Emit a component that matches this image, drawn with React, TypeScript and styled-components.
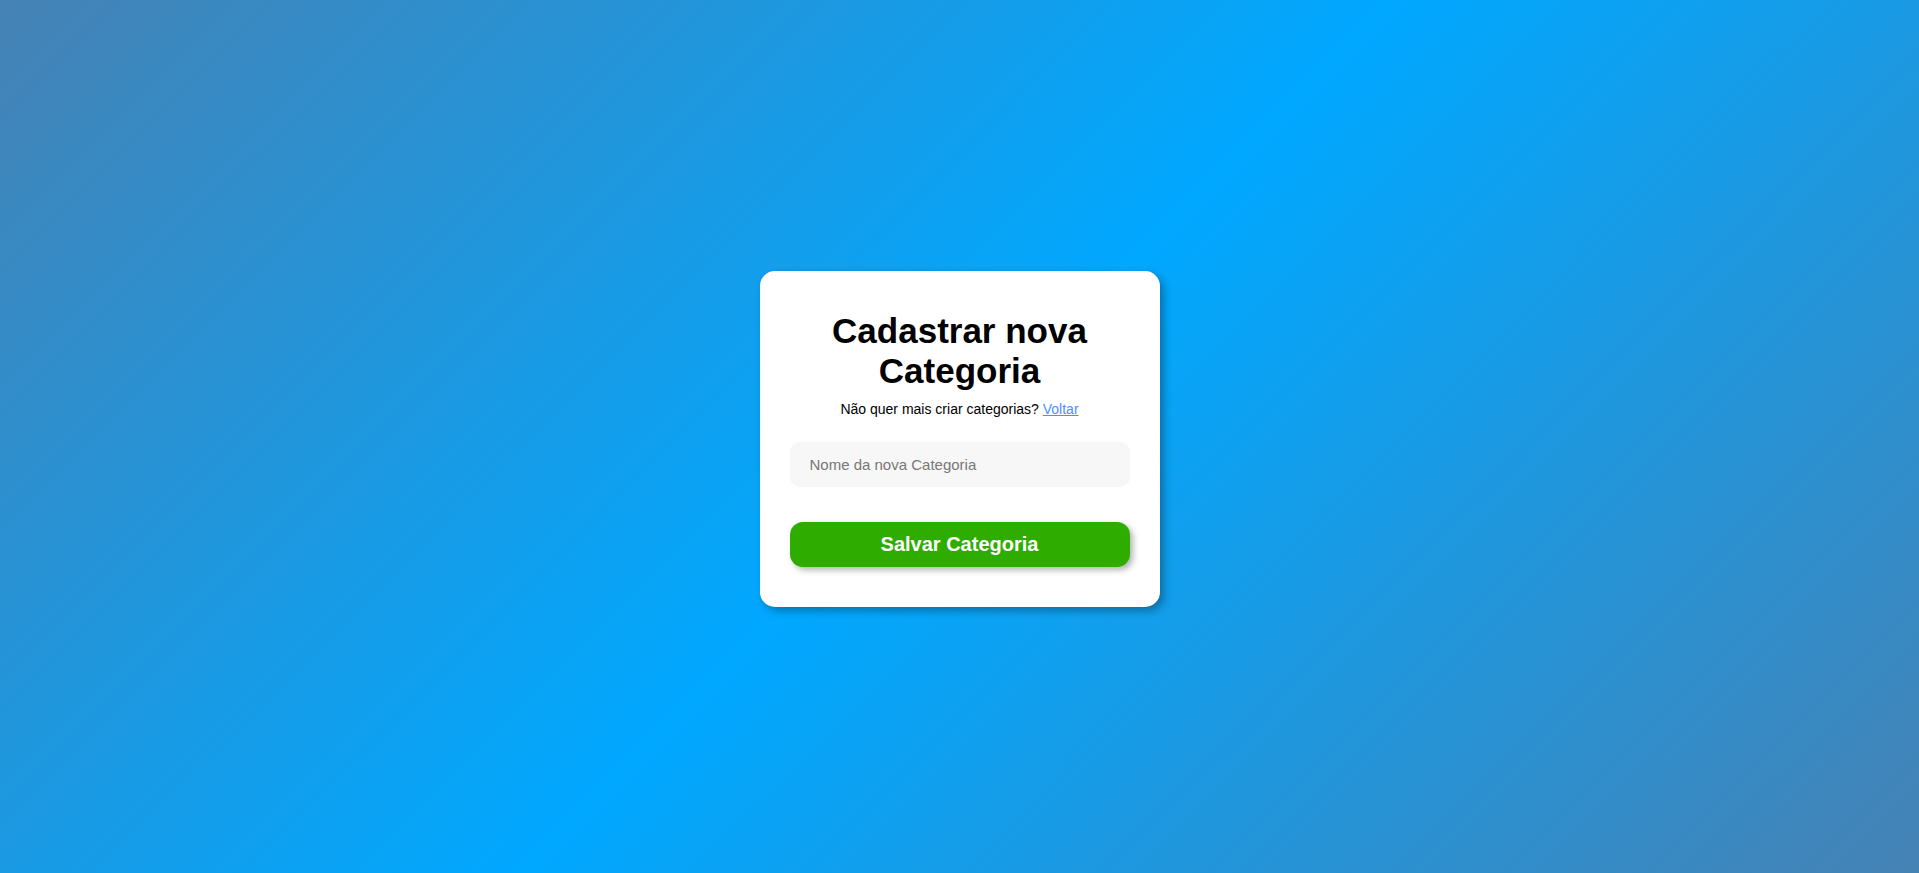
import React from "react";
import styled, { createGlobalStyle } from "styled-components";

const GlobalStyle = createGlobalStyle`
  * { box-sizing: border-box; }
  html, body { margin: 0; padding: 0; height: 100%; }
  body {
    font-family: "Liberation Sans", Arial, sans-serif;
    background: linear-gradient(135deg, #4682b4 0%, #00a8ff 50%, #4682b4 100%);
    background-attachment: fixed;
  }
  #root { height: 100%; }
`;

const Page = styled.main`
  min-height: 100vh;
  display: flex;
  align-items: center;
  justify-content: center;
  padding-top: 5px;
`;

const Card = styled.form`
  width: 400px;
  background: #ffffff;
  border-radius: 15px;
  padding: 40px 30px;
  box-shadow: 4px 4px 8px rgba(0, 0, 0, 0.3);
  display: flex;
  flex-direction: column;
  align-items: stretch;
`;

const Title = styled.h1`
  margin: 0;
  font-size: 35px;
  font-weight: 700;
  text-align: center;
  color: #000;
`;

const Subtitle = styled.p`
  margin: 10px 0 0;
  font-size: 14px;
  text-align: center;
  color: #000;
`;

const BackLink = styled.a`
  color: #4d8eff;
  text-decoration: underline;
  cursor: pointer;
`;

const Input = styled.input`
  margin-top: 25px;
  height: 45px;
  width: 100%;
  border: none;
  outline: none;
  border-radius: 10px;
  background: #f7f7f7;
  padding: 0 20px;
  font-family: "Liberation Sans", Arial, sans-serif;
  font-size: 15px;
  color: #333;
  &::placeholder { color: #777; }
`;

const SaveButton = styled.button`
  margin-top: 35px;
  height: 45px;
  width: 100%;
  border: none;
  border-radius: 13px;
  background: #2ead00;
  color: #fff;
  font-family: "Liberation Sans", Arial, sans-serif;
  font-size: 20px;
  font-weight: 700;
  box-shadow: 3px 3px 6px rgba(0, 0, 0, 0.3);
  cursor: pointer;
`;

export default function App() {
  return (
    <>
      <GlobalStyle />
      <Page>
        <Card onSubmit={(e) => e.preventDefault()}>
          <Title>Cadastrar nova Categoria</Title>
          <Subtitle>
            Não quer mais criar categorias? <BackLink href="#">Voltar</BackLink>
          </Subtitle>
          <Input type="text" placeholder="Nome da nova Categoria" />
          <SaveButton type="submit">Salvar Categoria</SaveButton>
        </Card>
      </Page>
    </>
  );
}
